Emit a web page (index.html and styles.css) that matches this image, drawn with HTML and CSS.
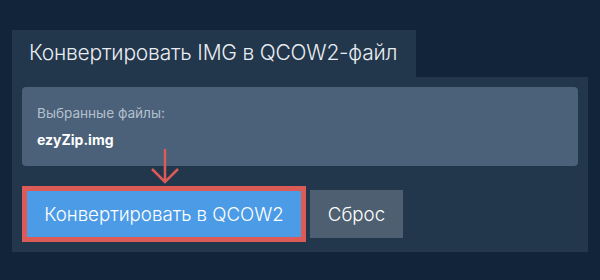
FILE: index.html
```html
<!DOCTYPE html>
<html lang="ru">
<head>
  <meta charset="UTF-8" />
  <meta name="viewport" content="width=device-width, initial-scale=1.0"/>
  <title>IMG в QCOW2</title>
  <link rel="stylesheet" href="styles.css">
</head>
<body>
  <div class="converter">
    <div class="tab">Конвертировать IMG в QCOW2-файл</div>
    <div class="panel">
      <div class="files">
        <div class="files-label">Выбранные файлы:</div>
        <div class="files-name">ezyZip.img</div>
      </div>
      <div class="actions">
        <svg class="pointer" width="30" height="36" viewBox="0 0 30 36">
          <path d="M15 1 V34 M2 21 L15 34 L28 21" fill="none" stroke="#dc5b57" stroke-width="2.5"/>
        </svg>
        <button class="btn btn-convert">Конвертировать в QCOW2</button>
        <button class="btn btn-reset">Сброс</button>
      </div>
    </div>
  </div>
</body>
</html>
```

FILE: styles.css
```css
body {
  margin: 0;
  padding: 0;
  font-family: Inter, 'Noto Sans', sans-serif;
  background: #11243a;
  height: 280px;
}

.converter {
  padding: 30px 0 0 12px;
}

.tab {
  display: inline-block;
  width: 404px;
  height: 47px;
  line-height: 45px;
  padding-left: 17px;
  box-sizing: border-box;
  background: #22364c;
  color: #e9edf1;
  font-size: 21px;
  font-weight: 300;
  letter-spacing: -0.2px;
  vertical-align: top;
}

.panel {
  width: 576px;
  box-sizing: border-box;
  padding: 10px 10px 10px 10px;
  background: #22364c;
}

.files {
  height: 79px;
  box-sizing: border-box;
  padding: 17px 15px 0;
  background: #4a6179;
  border-radius: 4px;
}

.files-label {
  color: #b4c0cd;
  font-size: 13.6px;
  line-height: 18px;
}

.files-name {
  margin-top: 8px;
  color: #ffffff;
  font-size: 14px;
  font-weight: 700;
  line-height: 20px;
}

.actions {
  position: relative;
  display: flex;
  align-items: center;
  gap: 4px;
  margin-top: 20px;
}

.pointer {
  position: absolute;
  left: 128px;
  top: -38px;
}

.btn {
  border: none;
  color: #ffffff;
  font-family: inherit;
  font-size: 18.7px;
  font-weight: 300;
  cursor: pointer;
}

.btn-convert {
  width: 284px;
  height: 56px;
  background: #4c9be6;
  border: 5px solid #dc5b57;
}

.btn-reset {
  width: 93px;
  height: 48px;
  background: #4d5f70;
}
```
